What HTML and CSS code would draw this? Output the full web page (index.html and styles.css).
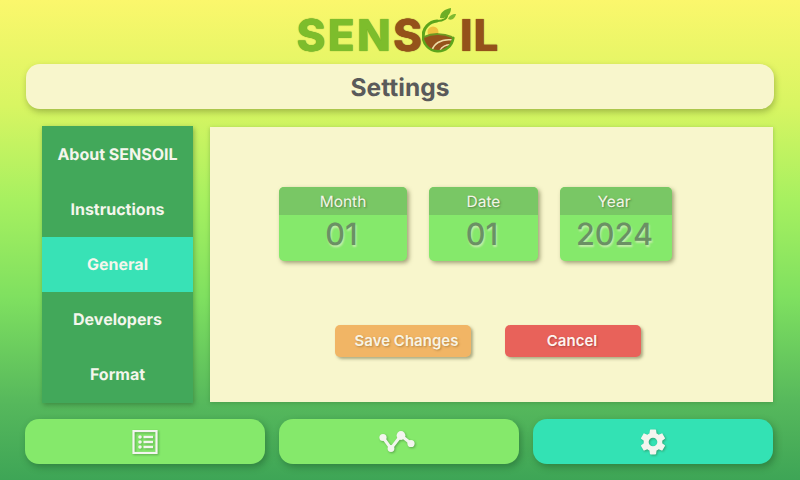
FILE: index.html
```html
<!DOCTYPE html>
<html lang="en">
<head>
<meta charset="utf-8">
<title>SENSOIL Settings</title>
<link rel="stylesheet" href="styles.css">
</head>
<body>
<div class="app">
  <div class="logo">
    <span class="logo-green">SEN</span><span class="logo-brown">S</span>
    <svg class="logo-o" width="38" height="48" viewBox="0 0 38 48">
      <defs><clipPath id="field"><circle cx="16" cy="31" r="14"/></clipPath></defs>
      <path d="M15 16A15 15 0 1 0 31 33" fill="none" stroke="#5da51c" stroke-width="3.200" stroke-linecap="round"/>
      <path d="M15 16C22 16 26 13 25 9" fill="none" stroke="#5da51c" stroke-width="1.800"/>
      <path d="M18 13C18 7 23 4 29 3C29 9 25 14 18 13Z" fill="#6cae26"/>
      <path d="M26 14C27 11 30 9 34 9C33 13 30 16 26 14Z" fill="#7fba30"/>
      <circle cx="11" cy="27" r="5.500" fill="#efc23e"/>
      <g clip-path="url(#field)">
        <path d="M2 32C10 28 22 28 32 33V46H2Z" fill="#94531c"/>
        <path d="M2 32C10 28 22 28 32 33" fill="none" stroke="#6e9a22" stroke-width="2"/>
        <path d="M10 46C11 40 18 33 31 35" fill="none" stroke="#ecdda6" stroke-width="1.500"/>
        <path d="M18 46C19 42 24 39 31 40" fill="none" stroke="#ecdda6" stroke-width="1.500"/>
      </g>
    </svg>
    <span class="logo-brown">IL</span>
  </div>

  <header class="title-bar">Settings</header>

  <main class="middle">
    <nav class="sidebar">
      <a class="side-item">About SENSOIL</a>
      <a class="side-item">Instructions</a>
      <a class="side-item active">General</a>
      <a class="side-item">Developers</a>
      <a class="side-item">Format</a>
    </nav>
    <section class="panel">
      <div class="fields">
        <div class="field field-month">
          <div class="field-label">Month</div>
          <div class="field-value">01</div>
        </div>
        <div class="field field-date">
          <div class="field-label">Date</div>
          <div class="field-value">01</div>
        </div>
        <div class="field field-year">
          <div class="field-label">Year</div>
          <div class="field-value">2024</div>
        </div>
      </div>
      <div class="actions">
        <button class="btn btn-save">Save Changes</button>
        <button class="btn btn-cancel">Cancel</button>
      </div>
    </section>
  </main>

  <footer class="tabs">
    <div class="tab">
      <svg class="icon" width="26" height="24" viewBox="0 0 26 24">
        <rect x="1.500" y="1" width="23" height="22" fill="none" stroke="currentColor" stroke-width="2.200"/>
        <g fill="currentColor">
          <circle cx="8" cy="7" r="1.800"/><rect x="11.500" y="5.800" width="9.500" height="2.400"/>
          <circle cx="8" cy="12" r="1.800"/><rect x="11.500" y="10.800" width="9.500" height="2.400"/>
          <circle cx="8" cy="17" r="1.800"/><rect x="11.500" y="15.800" width="9.500" height="2.400"/>
        </g>
      </svg>
    </div>
    <div class="tab">
      <svg class="icon" width="40" height="24" viewBox="0 0 40 24">
        <path d="M4 7.500L12 18.500L22 5.500L32 13.500" fill="none" stroke="currentColor" stroke-width="3"/>
        <circle cx="4" cy="7.500" r="3.600" fill="currentColor"/>
        <circle cx="12" cy="18.500" r="3.400" fill="currentColor"/>
        <circle cx="22" cy="5.500" r="4.400" fill="currentColor"/>
        <circle cx="32" cy="13.500" r="3.600" fill="currentColor"/>
      </svg>
    </div>
    <div class="tab active">
      <svg class="icon" width="26" height="26" viewBox="1.500 1.500 21 21">
        <path fill="currentColor" d="M19.430 12.980c.04-.32.070-.64.070-.98s-.03-.66-.07-.98l2.110-1.650c.19-.15.240-.42.120-.64l-2-3.460c-.12-.22-.39-.30-.61-.22l-2.490 1c-.52-.40-1.080-.73-1.690-.98l-.38-2.650C14.460 2.180 14.250 2 14 2h-4c-.25 0-.46.180-.49.420l-.38 2.650c-.61.25-1.170.59-1.690.98l-2.490-1c-.23-.09-.49 0-.61.220l-2 3.460c-.13.220-.07.490.12.640l2.110 1.650c-.04.320-.07.650-.07.980s.03.660.07.980l-2.110 1.650c-.19.150-.24.420-.12.640l2 3.460c.12.220.39.300.61.220l2.490-1c.52.400 1.080.730 1.690.980l.38 2.650c.03.240.24.420.49.420h4c.25 0 .46-.18.49-.42l.38-2.650c.61-.25 1.170-.59 1.690-.98l2.490 1c.23.090.49 0 .61-.22l2-3.460c.12-.22.07-.49-.12-.64l-2.110-1.650zM12 15.500c-1.930 0-3.500-1.570-3.500-3.500s1.570-3.500 3.500-3.500 3.500 1.570 3.500 3.500-1.570 3.500-3.500 3.500z"/>
      </svg>
    </div>
  </footer>
</div>
</body>
</html>
```
FILE: styles.css
```css
* { box-sizing: border-box; }

html, body {
  margin: 0;
  padding: 0;
}

body {
  width: 800px;
  height: 480px;
  overflow: hidden;
  font-family: Inter, "Liberation Sans", sans-serif;
  text-rendering: geometricPrecision;
  background: linear-gradient(180deg, #fbf76c 0%, #d8f562 22%, #a6f060 42%, #7fe060 62%, #56b85c 84%, #3ea556 100%);
}

.app {
  display: flex;
  flex-direction: column;
  width: 800px;
  height: 480px;
}

.logo {
  height: 64px;
  display: flex;
  justify-content: center;
  align-items: flex-end;
  padding-right: 4px;
  font-size: 44px;
  font-weight: 800;
  line-height: 57px;
  letter-spacing: 1px;
}

.logo-green {
  color: #7dbd2c;
  text-shadow: 0 0 1px #55941a;
  height: 57px;
  letter-spacing: 2.300px;
}

.logo-brown {
  color: #94521a;
  text-shadow: 0 0 1px #6e3a10;
  height: 57px;
}

.logo-o {
  align-self: flex-start;
  flex: none;
  margin: 5px 0 0 -1px;
}

.title-bar {
  margin: 0 26px;
  height: 45px;
  flex: none;
  border-radius: 14px;
  background: #f8f6cc;
  box-shadow: 1px 3px 6px rgba(60, 80, 20, 0.35);
  display: flex;
  align-items: center;
  justify-content: center;
  font-size: 24.500px;
  font-weight: 700;
  color: #5a5a5a;
}

.middle {
  display: flex;
  margin: 17px 27px 0 42px;
  height: 277px;
  flex: none;
  gap: 17px;
}

.sidebar {
  width: 151px;
  flex: none;
  display: flex;
  flex-direction: column;
  padding-top: 1px;
  background: #42a85a;
  box-shadow: 1px 2px 5px rgba(30, 70, 30, 0.4);
}

.side-item {
  height: 55px;
  padding-bottom: 2px;
  display: flex;
  align-items: center;
  justify-content: center;
  font-size: 16px;
  font-weight: 700;
  color: #f4f6ec;
}

.side-item.active {
  background: #38e2b6;
}

.panel {
  flex: 1;
  margin: 1px 0;
  background: #f8f6cc;
  box-shadow: 0 1px 4px rgba(40, 90, 30, 0.3);
  display: flex;
  flex-direction: column;
}

.fields {
  display: flex;
  gap: 22px;
  margin: 60px 0 0 69px;
}

.field {
  height: 74px;
  border-radius: 5px;
  overflow: hidden;
  background: #85e96b;
  box-shadow: 2px 2px 4px rgba(90, 90, 50, 0.55);
  display: flex;
  flex-direction: column;
  align-items: center;
}

.field-month { width: 128px; }
.field-date { width: 109px; }
.field-year { width: 112px; }

.field-label {
  width: 100%;
  height: 28px;
  flex: none;
  display: flex;
  align-items: center;
  justify-content: center;
  background: #79c765;
  color: #f2f5e6;
  font-size: 15.500px;
  text-shadow: 1px 1px 2px rgba(60, 90, 50, 0.6);
}

.field-year .field-label {
  padding-right: 4px;
}

.field-value {
  font-size: 30.500px;
  line-height: 40px;
  font-weight: 500;
  padding-right: 3px;
  color: #6b9064;
  text-shadow: 1px 2px 2px rgba(225, 240, 200, 0.7);
}

.actions {
  display: flex;
  gap: 34px;
  margin: 64px 0 0 125px;
}

.btn {
  width: 136px;
  height: 32px;
  padding: 0 0 2px;
  border: 0;
  border-radius: 5px;
  font-family: inherit;
  font-size: 15px;
  font-weight: 600;
  color: #f8f4e4;
  box-shadow: 2px 2px 3px rgba(100, 100, 60, 0.5);
}

.btn-save {
  padding-left: 7px;
  background: #f1b565;
  text-shadow: 1px 1px 2px rgba(130, 90, 40, 0.5);
}

.btn-cancel {
  padding-right: 2px;
  background: #e8625a;
  color: #fdf3ee;
  text-shadow: 1px 1px 2px rgba(120, 40, 40, 0.5);
}

.tabs {
  display: flex;
  gap: 14px;
  margin: 16px 27px 0 25px;
}

.tab {
  flex: 1;
  height: 45px;
  border-radius: 14px;
  background: #85e96b;
  box-shadow: 2px 3px 7px rgba(20, 70, 30, 0.4);
  display: flex;
  align-items: center;
  justify-content: center;
  color: #f3f5ef;
}

.tab.active {
  background: #33e2b4;
}

.icon {
  filter: drop-shadow(1px 1px 1px rgba(40, 90, 40, 0.45));
}
```
